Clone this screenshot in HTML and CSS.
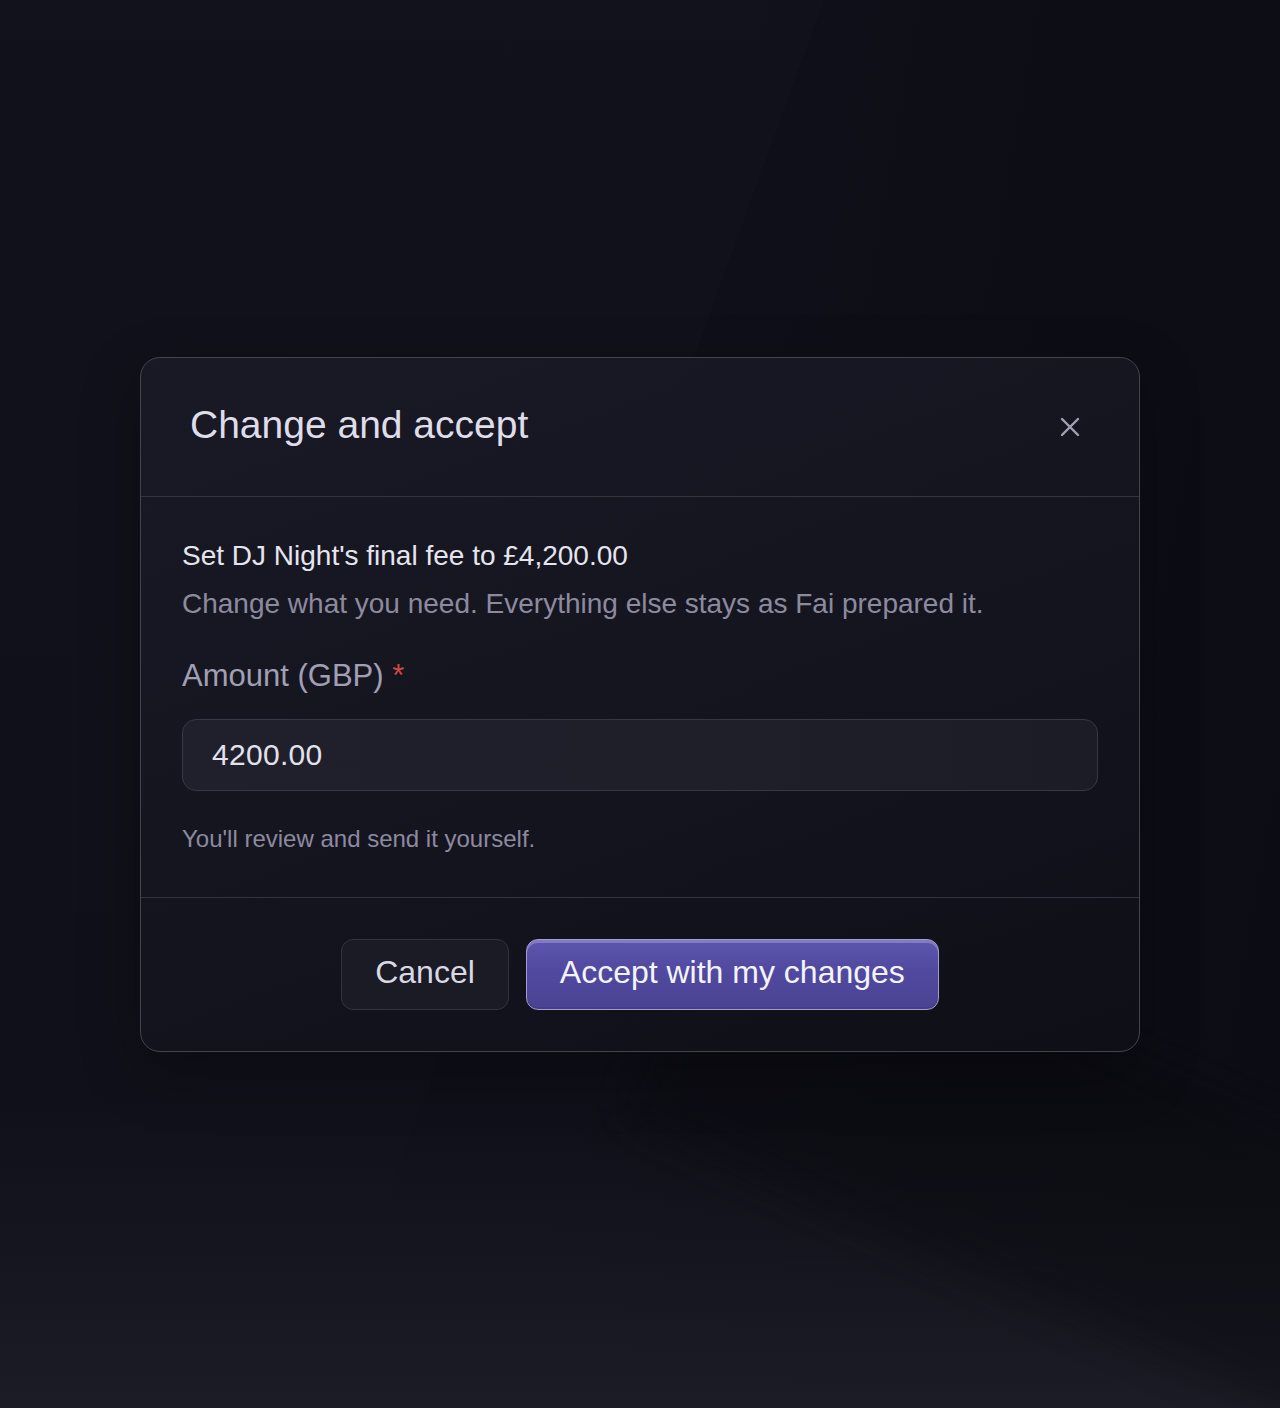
FILE: index.html
```html
<!DOCTYPE html>
<html lang="en">
<head>
<meta charset="utf-8">
<title>Change and accept</title>
<link rel="stylesheet" href="styles.css">
</head>
<body>
<div class="backdrop">
  <div class="shape shape-a"></div>
  <div class="shape shape-b"></div>
  <div class="modal" role="dialog" aria-labelledby="modal-title">
    <div class="modal-header">
      <h2 id="modal-title" class="modal-title">Change and accept</h2>
      <button class="close-btn" aria-label="Close">
        <svg width="22" height="22" viewBox="0 0 22 22" fill="none" stroke="currentColor" stroke-width="2.4" stroke-linecap="round"><path d="M3 3L19 19M19 3L3 19"/></svg>
      </button>
    </div>
    <div class="modal-body">
      <p class="summary">Set DJ Night's final fee to £4,200.00</p>
      <p class="subtext">Change what you need. Everything else stays as Fai prepared it.</p>
      <label class="field-label" for="amount">Amount (GBP) <span class="req">*</span></label>
      <input id="amount" class="field-input" type="text" value="4200.00">
      <p class="hint">You'll review and send it yourself.</p>
    </div>
    <div class="modal-footer">
      <button class="btn btn-secondary">Cancel</button>
      <button class="btn btn-primary">Accept with my changes</button>
    </div>
  </div>
</div>
</body>
</html>
```
FILE: styles.css
```css
* { box-sizing: border-box; }
html, body {
  margin: 0;
  padding: 0;
  height: 100%;
}
body {
  font-family: "Liberation Sans", Arial, sans-serif;
  background: #0e0e18;
}
.backdrop {
  position: relative;
  min-height: 1408px;
  display: flex;
  align-items: center;
  justify-content: center;
  overflow: hidden;
  background:
    linear-gradient(180deg, rgba(27,27,38,0) 0%, rgba(27,27,38,0) 78%, rgba(28,28,39,1) 100%),
    linear-gradient(100deg, #0f0f19 0%, #0f0f19 50%, #0d0d16 75%, #0c0c14 100%);
}
.shape {
  position: absolute;
  pointer-events: none;
}
.shape-a {
  left: -200px;
  top: -100px;
  width: 1060px;
  height: 1400px;
  background: linear-gradient(180deg, rgba(22,22,34,0.35), rgba(22,22,34,0.15));
  transform: skewX(-20deg);
  transform-origin: top left;
}
.shape-b {
  left: 640px;
  top: 1020px;
  width: 760px;
  height: 260px;
  background: rgba(8,8,14,0.45);
  transform: rotate(24deg);
  filter: blur(24px);
}
.modal {
  position: relative;
  width: 1000px;
  background: linear-gradient(160deg, rgba(26,26,38,0.95) 0%, rgba(21,21,32,0.95) 50%, rgba(15,15,24,0.95) 100%);
  border: 1px solid #44444f;
  border-radius: 20px;
  box-shadow: 0 20px 60px rgba(0,0,0,0.3);
}
.modal-header {
  display: flex;
  align-items: center;
  justify-content: space-between;
  padding: 43px 47px 47px 49px;
  border-bottom: 1px solid #34343f;
  height: 139px;
}
.modal-title {
  margin: 0;
  font-size: 39px;
  font-weight: 400;
  line-height: 47px;
  color: #dedde9;
}
.close-btn {
  width: 44px;
  height: 44px;
  display: flex;
  align-items: center;
  justify-content: center;
  background: none;
  border: none;
  color: #a3a1b6;
  padding: 0;
  margin-top: 4px;
  cursor: pointer;
}
.modal-body {
  padding: 38px 41px 40px 41px;
  display: flex;
  flex-direction: column;
}
.summary {
  margin: 0;
  font-size: 28px;
  line-height: 42px;
  color: #e6e5ef;
}
.subtext {
  margin: 6px 0 0;
  font-size: 28px;
  line-height: 42px;
  color: #8d8aa0;
}
.field-label {
  margin-top: 28px;
  font-size: 31px;
  line-height: 46px;
  color: #a29fb4;
}
.req {
  color: #cf4646;
}
.field-input {
  margin-top: 20px;
  width: 100%;
  height: 72px;
  padding: 0 29px;
  background: linear-gradient(90deg, #20202c 0%, #1f1f2a 60%, #1c1c27 100%);
  border: 1px solid #383845;
  border-radius: 14px;
  color: #e3e2ec;
  font-family: "Liberation Sans", Arial, sans-serif;
  font-size: 30px;
  letter-spacing: 0.3px;
  outline: none;
}
.hint {
  margin: 30px 0 0;
  font-size: 24px;
  line-height: 36px;
  color: #8d8aa0;
}
.modal-footer {
  border-top: 1px solid #34343f;
  padding: 41px 0 41px;
  display: flex;
  justify-content: center;
  gap: 17px;
}
.btn {
  height: 71px;
  padding: 0 33px 4px;
  border-radius: 12px;
  font-family: "Liberation Sans", Arial, sans-serif;
  font-size: 32px;
  line-height: 1;
  cursor: pointer;
}
.btn-secondary {
  background: #1b1b25;
  border: 1px solid #33333f;
  color: #d9d8e4;
}
.btn-primary {
  background: linear-gradient(180deg, #5d56ad 0%, #5149a0 45%, #4a4392 100%);
  border: 1px solid #a29dcd;
  color: #f4f3fb;
  box-shadow: inset 0 3px 0 rgba(200,196,240,0.35), inset 0 -2px 0 rgba(60,50,130,0.4);
}
```
